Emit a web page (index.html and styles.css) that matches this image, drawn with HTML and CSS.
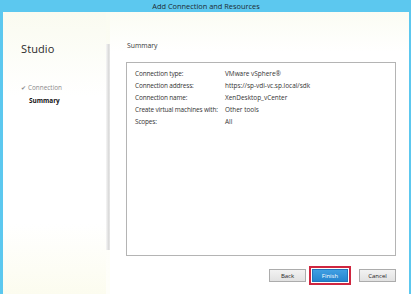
FILE: index.html
```html
<!DOCTYPE html>
<html>
<head>
<meta charset="utf-8">
<link rel="stylesheet" href="styles.css">
</head>
<body>
<div class="window">
  <div class="titlebar">Add Connection and Resources</div>
  <div class="client">
    <aside class="sidebar">
      <div class="brand">Studio</div>
      <ul class="steps">
        <li class="step done"><span class="check">&#10004;</span>Connection</li>
        <li class="step current">Summary</li>
      </ul>
    </aside>
    <div class="divider"></div>
    <main class="main">
      <h1 class="heading">Summary</h1>
      <div class="summary">
        <div class="row"><span class="label">Connection type:</span><span class="value">VMware vSphere®</span></div>
        <div class="row"><span class="label">Connection address:</span><span class="value">https://sp-vdi-vc.sp.local/sdk</span></div>
        <div class="row"><span class="label">Connection name:</span><span class="value">XenDesktop_vCenter</span></div>
        <div class="row"><span class="label">Create virtual machines with:</span><span class="value">Other tools</span></div>
        <div class="row"><span class="label">Scopes:</span><span class="value">All</span></div>
      </div>
      <div class="buttons">
        <button class="btn">Back</button>
        <span class="highlight"><button class="btn primary">Finish</button></span>
        <button class="btn">Cancel</button>
      </div>
    </main>
  </div>
</div>
</body>
</html>
```
FILE: styles.css
```css
* { box-sizing: border-box; }
html, body { margin: 0; padding: 0; }
body {
  width: 411px;
  height: 294px;
  overflow: hidden;
  font-family: "Open Sans", "Noto Sans", sans-serif;
  color: #222;
}
.window {
  width: 411px;
  height: 294px;
  background: #5cc8ef;
  padding: 0 2px 0 3px;
  display: flex;
  flex-direction: column;
}
.titlebar {
  height: 12px;
  line-height: 12px;
  text-align: center;
  font-size: 7.4px;
  color: #1d2a33;
  flex: none;
}
.client {
  flex: 1;
  display: flex;
  background: linear-gradient(180deg, #fbfcf1 0%, #fdfdf8 40%, #fefef9 100%);
}
.sidebar {
  width: 103px;
  flex: none;
  padding: 30px 0 0 18px;
  background: linear-gradient(180deg, #fafbf0 0%, #ffffff 30%, #ffffff 75%, #fcfcef 100%);
}
.brand {
  font-size: 11px;
  line-height: 14px;
  color: #2a2a2a;
  font-weight: 400;
  letter-spacing: 0.1px;
}
.steps {
  list-style: none;
  margin: 26px 0 0 0;
  padding: 0;
}
.step {
  font-size: 6.4px;
  line-height: 12px;
}
.step.done { color: #8a8a8a; }
.check { font-size: 5.5px; margin-right: 2px; color: #888; }
.step.current { font-weight: 700; color: #111; padding-left: 8px; line-height: 13px; }
.divider {
  width: 4px;
  flex: none;
  margin: 32px 0 44px 0;
  background: linear-gradient(90deg, #f6f6f6, #d8d8d8 70%, #ececec);
}
.main {
  flex: 1;
  display: flex;
  flex-direction: column;
  padding: 29px 9px 0 16px;
  background: linear-gradient(180deg, #fbfcf3 0px, #ffffff 40px, #ffffff 100%);
}
.heading {
  margin: 0;
  font-size: 6.8px;
  line-height: 10px;
  font-weight: 400;
  color: #333;
  padding-left: 1px;
}
.summary {
  margin-top: 11px;
  height: 194px;
  width: 270px;
  border: 1px solid #b4b4b4;
  background: #ffffff;
  padding: 5px 0 0 8px;
}
.row {
  display: flex;
  font-size: 6.45px;
  line-height: 12px;
  color: #333;
}
.label { width: 90px; flex: none; letter-spacing: -0.15px; }
.buttons {
  display: flex;
  justify-content: flex-end;
  align-items: center;
  width: 270px;
  margin-top: 10px;
}
.btn {
  font-family: "Open Sans", "Noto Sans", sans-serif;
  font-size: 6px;
  height: 13px;
  width: 37px;
  padding: 0;
  border: 1px solid #acacac;
  background: linear-gradient(180deg, #f2f2f2, #e2e2e2);
  color: #222;
  border-radius: 0;
}
.highlight {
  border: 2px solid #cf2640;
  padding: 1px;
  margin: 0 8px 0 3px;
  display: flex;
}
.btn.primary {
  background: linear-gradient(180deg, #3f9fe2, #2584cf);
  border-color: #2276bd;
  color: #fff;
  width: 36px;
}
```
